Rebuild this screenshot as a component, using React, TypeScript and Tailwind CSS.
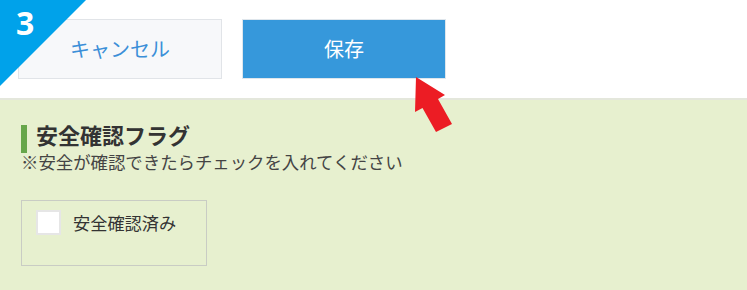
import { useState } from 'react';

export default function App() {
  const [checked, setChecked] = useState(false);

  return (
    <div className="min-h-[290px] w-[747px] bg-white font-['Noto_Sans_CJK_JP','Noto_Sans',sans-serif]">
      {/* Step badge + buttons */}
      <div className="relative flex h-[98px] gap-5 pl-[18px] pt-[19px]">
        <svg className="absolute left-0 top-0" width="86" height="86" viewBox="0 0 86 86">
          <polygon points="0,0 86,0 0,86" fill="#00a2ea" />
        </svg>
        <span className="absolute left-[16px] top-[3px] font-['Open_Sans',sans-serif] text-[32px] font-bold leading-[40px] text-white">
          3
        </span>
        <button className="h-[60px] w-[204px] border border-[#e1e4e8] bg-[#f7f8fa] text-[20px] text-[#3b8fd8]">
          キャンセル
        </button>
        <button className="h-[60px] w-[204px] border border-[#dfe6ec] bg-[#3698db] text-[20px] text-white">
          保存
        </button>
        <svg className="absolute left-0 top-0 overflow-visible" width="1" height="1">
          <polygon
            points="416,77 445,95 438,99 452,124 436,132 422.5,108 415,112"
            fill="#ec1c24"
          />
        </svg>
      </div>

      {/* Safety flag section */}
      <div className="min-h-[192px] border-t-2 border-[#e4e7dc] bg-[#e7f0cf] px-[21px] pt-[19px]">
        <div className="flex items-start gap-[9px]">
          <div className="mb-[-3px] mt-[6px] h-[28px] w-[6px] bg-[#67a64a]" />
          <h2 className="text-[22px] font-bold leading-[30px] text-[#333]">安全確認フラグ</h2>
        </div>
        <p className="mt-[2px] text-[17.4px] leading-[20px] text-[#444]">
          ※安全が確認できたらチェックを入れてください
        </p>
        <div className="mt-[28px] h-[66px] w-[186px] border border-[#c9ccc4] px-[14px] pt-[9px]">
          <label className="flex cursor-pointer items-center gap-3">
            <input
              type="checkbox"
              checked={checked}
              onChange={(e) => setChecked(e.target.checked)}
              className="h-[25px] w-[25px] appearance-none border-2 border-[#e6e6e6] bg-white checked:bg-[#3698db]"
            />
            <span className="text-[17.2px] text-[#333]">安全確認済み</span>
          </label>
        </div>
      </div>
    </div>
  );
}
